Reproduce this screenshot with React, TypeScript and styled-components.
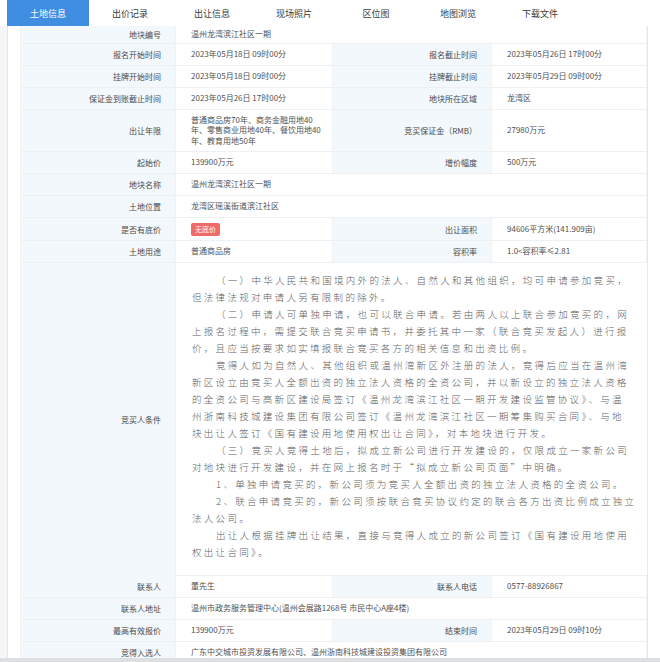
import React from "react";
import styled, { createGlobalStyle } from "styled-components";

const GlobalStyle = createGlobalStyle`
  html, body {
    margin: 0;
    padding: 0;
    background: #fff;
  }
  body {
    font-family: "Noto Sans CJK SC", "Noto Sans", sans-serif;
    color: #3a3a3a;
  }
`;

const tabs = ["土地信息", "出价记录", "出让信息", "现场照片", "区位图", "地图浏览", "下载文件"];

type Row = {
  label: string;
  value: React.ReactNode;
  label2?: string;
  value2?: React.ReactNode;
  h?: number;
};

const topRows: Row[] = [
  { label: "地块编号", value: "温州龙湾滨江社区一期", h: 18 },
  { label: "报名开始时间", value: "2023年05月18日 09时00分", label2: "报名截止时间", value2: "2023年05月26日 17时00分" },
  { label: "挂牌开始时间", value: "2023年05月18日 09时00分", label2: "挂牌截止时间", value2: "2023年05月29日 09时00分" },
  { label: "保证金到账截止时间", value: "2023年05月26日 17时00分", label2: "地块所在区域", value2: "龙湾区" },
  {
    label: "出让年限",
    value: (
      <>
        普通商品房70年、商务金融用地40
        <br />
        年、零售商业用地40年、餐饮用地40
        <br />
        年、教育用地50年
      </>
    ),
    label2: "竞买保证金（RMB）",
    value2: "27980万元",
    h: 42,
  },
  { label: "起始价", value: "139900万元", label2: "增价幅度", value2: "500万元" },
  { label: "地块名称", value: "温州龙湾滨江社区一期" },
  { label: "土地位置", value: "龙湾区瑶溪街道滨江社区" },
  { label: "是否有底价", value: "__badge__", label2: "出让面积", value2: "94606平方米(141.909亩)", h: 23 },
  { label: "土地用途", value: "普通商品房", label2: "容积率", value2: "1.0<容积率≤2.81" },
];

const bottomRows: Row[] = [
  { label: "联系人", value: "董先生", label2: "联系人电话", value2: "0577-88926867" },
  { label: "联系人地址", value: "温州市政务服务管理中心(温州会展路1268号 市民中心A座4楼)" },
  { label: "最高有效报价", value: "139900万元", label2: "结束时间", value2: "2023年05月29日 09时10分" },
  { label: "竞得入选人", value: "广东中交城市投资发展有限公司、温州浙南科技城建设投资集团有限公司" },
];

const conditionLines: { text: string; indent?: boolean }[] = [
  { text: "（一）中华人民共和国境内外的法人、自然人和其他组织，均可申请参加竞买，", indent: true },
  { text: "但法律法规对申请人另有限制的除外。" },
  { text: "（二）申请人可单独申请，也可以联合申请。若由两人以上联合参加竞买的，网", indent: true },
  { text: "上报名过程中，需提交联合竞买申请书，并委托其中一家（联合竞买发起人）进行报" },
  { text: "价，且应当按要求如实填报联合竞买各方的相关信息和出资比例。" },
  { text: "竞得人如为自然人、其他组织或温州湾新区外注册的法人，竞得后应当在温州湾", indent: true },
  { text: "新区设立由竞买人全额出资的独立法人资格的全资公司，并以新设立的独立法人资格" },
  { text: "的全资公司与高新区建设局签订《温州龙湾滨江社区一期开发建设监管协议》、与温" },
  { text: "州浙南科技城建设集团有限公司签订《温州龙湾滨江社区一期筹集购买合同》、与地" },
  { text: "块出让人签订《国有建设用地使用权出让合同》，对本地块进行开发。" },
  { text: "（三）竞买人竞得土地后，拟成立新公司进行开发建设的，仅限成立一家新公司", indent: true },
  { text: "对地块进行开发建设，并在网上报名时于“拟成立新公司页面”中明确。" },
  { text: "1、单独申请竞买的，新公司须为竞买人全额出资的独立法人资格的全资公司。", indent: true },
  { text: "2、联合申请竞买的，新公司须按联合竞买协议约定的联合各方出资比例成立独立", indent: true },
  { text: "法人公司。" },
  { text: "出让人根据挂牌出让结果，直接与竞得人成立的新公司签订《国有建设用地使用", indent: true },
  { text: "权出让合同》。" },
];

function InfoRow({ row }: { row: Row }) {
  const wide = !row.label2;
  return (
    <Line $h={row.h ?? 22}>
      <Label>{row.label}</Label>
      <Value $span={wide ? 3 : 1}>
        {row.value === "__badge__" ? <Badge>无底价</Badge> : row.value}
      </Value>
      {!wide && <Label>{row.label2}</Label>}
      {!wide && <Value>{row.value2}</Value>}
    </Line>
  );
}

export default function App() {
  return (
    <Page>
      <GlobalStyle />
      <TabBar>
        {tabs.map((t, i) => (
          <Tab key={t} $active={i === 0}>
            {t}
          </Tab>
        ))}
      </TabBar>
      <Body>
        <Panel>
          <Table>
            {topRows.map((r) => (
              <InfoRow key={r.label} row={r} />
            ))}
            <Line $h={313}>
              <Label>竞买人条件</Label>
              <Terms>
                {conditionLines.map((l, i) => (
                  <TermLine key={i} $indent={!!l.indent}>
                    {l.text}
                  </TermLine>
                ))}
              </Terms>
            </Line>
            {bottomRows.map((r) => (
              <InfoRow key={r.label} row={r} />
            ))}
          </Table>
        </Panel>
      </Body>
      <ScrollStrip />
    </Page>
  );
}

const Page = styled.div`
  height: 662px;
  display: flex;
  flex-direction: column;
  overflow: hidden;
`;

const TabBar = styled.nav`
  height: 26px;
  flex: none;
  display: flex;
  padding-left: 7px;
  background: #fff;
`;

const Tab = styled.div<{ $active?: boolean }>`
  width: 82px;
  display: flex;
  align-items: center;
  justify-content: center;
  font-size: 9px;
  color: ${(p) => (p.$active ? "#fff" : "#3a3a3a")};
  background: ${(p) => (p.$active ? "#3f8ee2" : "transparent")};
`;

const Body = styled.main`
  flex: 1;
  min-height: 0;
  display: flex;
  padding-left: 7px;
  background: #f5f6f7;
  overflow: hidden;
`;

const Panel = styled.section`
  flex: 1;
  background: #fff;
  border-left: 1px solid #e3e5e8;
  padding: 0 11px 0 12px;
`;

const Table = styled.div`
  width: 628px;
  border-left: 1px solid #edf1f5;
  border-right: 1px solid #e6eaee;
  box-sizing: border-box;
`;

const Line = styled.div<{ $h: number }>`
  display: grid;
  grid-template-columns: 155px 157px 159px 155px;
  height: ${(p) => p.$h}px;
  box-sizing: border-box;
  border-bottom: 1px solid #edf1f4;
`;

const Label = styled.div`
  display: flex;
  align-items: center;
  justify-content: flex-end;
  padding-right: 14px;
  background: #f3f8fc;
  border-right: 1px solid #f0f3f6;
  font-size: 8px;
  color: #4a4a4a;
  white-space: nowrap;
`;

const Value = styled.div<{ $span?: number }>`
  grid-column: span ${(p) => p.$span ?? 1};
  display: flex;
  align-items: center;
  padding-left: 15px;
  font-size: 8px;
  line-height: 10.5px;
  color: #505050;
  white-space: nowrap;
  border-right: 1px solid #f0f3f6;
`;

const Badge = styled.span`
  display: inline-flex;
  align-items: center;
  justify-content: center;
  width: 29px;
  height: 13px;
  border-radius: 2px;
  background: #ef6a6a;
  color: #fff;
  font-size: 7px;
`;

const Terms = styled.div`
  grid-column: span 3;
  padding: 9px 0 15px 16px;
  font-size: 9.5px;
  line-height: 17px;
  letter-spacing: 2.3px;
  color: #5e5e5e;
  font-weight: 300;
`;

const TermLine = styled.div<{ $indent: boolean }>`
  white-space: pre;
  padding-left: ${(p) => (p.$indent ? "24px" : "0")};
`;

const ScrollStrip = styled.div`
  flex: none;
  height: 4px;
  background: #dedfe1;
`;
